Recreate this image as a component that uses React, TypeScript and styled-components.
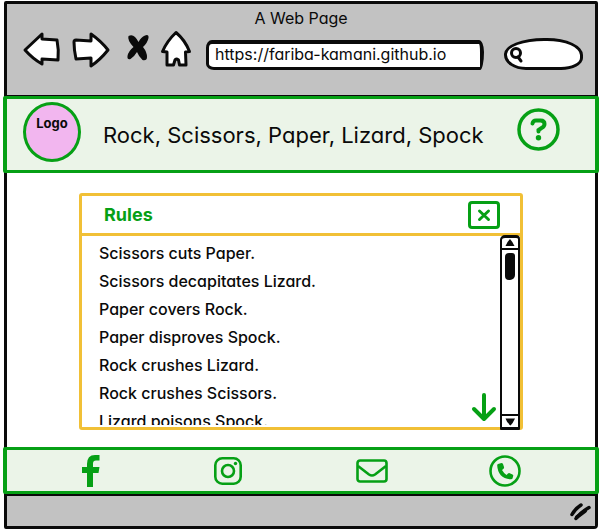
import React, { useRef } from "react";
import styled, { createGlobalStyle } from "styled-components";

const green = "#06a015";
const mint = "#ebf4e8";
const amber = "#f1c036";
const ink = "#0a0a0a";
const chrome = "#c2c2c2";

const GlobalStyle = createGlobalStyle`
  *, *::before, *::after { box-sizing: border-box; }
  body {
    margin: 0;
    background: #fff;
    color: ${ink};
    font-family: Inter, "Noto Sans", sans-serif;
    font-feature-settings: "cv11";
  }
  button, input { font: inherit; font-feature-settings: inherit; color: inherit; }
  svg { display: block; overflow: visible; }
`;

const BrowserWindow = styled.div`
  min-height: 526px;
  margin: 1px 2px 3px 4px;
  border: 3px solid ${ink};
  border-radius: 2px 2px 4px 2px;
  display: flex;
  flex-direction: column;
`;

const Chrome = styled.header`
  background: ${chrome};
  height: 92px;
  border-bottom: 1px solid ${ink};
`;

const WindowTitle = styled.div`
  padding-top: 4px;
  text-align: center;
  font-size: 16px;
  line-height: 20px;
`;

const Toolbar = styled.nav`
  display: flex;
  align-items: center;
  padding: 0 12px 0 16px;
  height: 42px;
`;

const IconButton = styled.button<{ $gap?: number }>`
  flex: none;
  padding: 0;
  border: 0;
  background: none;
  color: inherit;
  cursor: pointer;
  margin-right: ${(p) => p.$gap ?? 0}px;
`;

const Address = styled.input`
  flex: 1;
  min-width: 0;
  height: 30px;
  margin: 11px 20px 0 -1px;
  padding: 0 6px 3px;
  border: 3px solid ${ink};
  border-width: 4px 4px 3px 3px;
  border-radius: 6px 5px 4px 8px / 8px 12px 18px 6px;
  background: #fff;
  font-size: 16px;
  line-height: 22px;
  outline: none;
`;

const SearchBox = styled.label`
  flex: none;
  display: flex;
  align-items: center;
  width: 79px;
  height: 32px;
  margin-top: 10px;
  padding-left: 3px;
  border: 3px solid ${ink};
  border-radius: 40px 36px 22px 22px / 16px 17px 12px 15px;
  background: #fff;
`;

const SearchInput = styled.input`
  width: 100%;
  min-width: 0;
  padding: 0 4px;
  border: 0;
  background: none;
  font-size: 14px;
  outline: none;
`;

const Band = styled.div`
  margin: 0 -4px;
  border: 3px solid ${green};
  border-width: 3px 4px;
  border-radius: 2px;
  background: ${mint};
`;

const SiteHeader = styled(Band)`
  display: flex;
  align-items: center;
  height: 77px;
  padding: 0 35px 0 16px;
`;

const Logo = styled.a`
  flex: none;
  width: 58px;
  height: 60px;
  margin-top: -5px;
  padding-top: 10px;
  border: 3px solid ${green};
  border-radius: 50%;
  background: #f2b6ef;
  color: ${ink};
  font-size: 13px;
  font-weight: 700;
  line-height: 16px;
  text-align: center;
  text-decoration: none;
`;

const SiteTitle = styled.h1`
  flex: 1;
  margin: 0;
  padding-left: 22px;
  font-size: 22px;
  font-weight: 400;
  line-height: 28px;
  white-space: nowrap;
`;

const HelpButton = styled(IconButton)`
  margin-top: -10px;
`;

const Main = styled.main`
  flex: 1;
  padding: 20px 72px 17px;
  background: #fff;
`;

const Dialog = styled.section`
  height: 237px;
  border: 3px solid ${amber};
  border-radius: 3px;
  display: flex;
  flex-direction: column;
`;

const DialogHeader = styled.div`
  display: flex;
  align-items: center;
  justify-content: space-between;
  height: 40px;
  padding: 0 20px 0 22px;
  border-bottom: 3px solid ${amber};
`;

const DialogTitle = styled.h2`
  margin: 0;
  color: ${green};
  font-size: 18px;
  font-weight: 700;
  line-height: 24px;
`;

const DialogBody = styled.div`
  flex: 1;
  min-height: 0;
  display: flex;
`;

const RuleList = styled.ul`
  flex: 1;
  height: 189px;
  margin: 0;
  padding: 3px 0 0 17px;
  overflow: hidden;
  list-style: none;
  font-size: 16px;
  font-weight: 500;
  line-height: 28px;
`;

const MoreButton = styled(IconButton)`
  align-self: flex-end;
  margin: 0 4px 6px 0;
`;

const ScrollRail = styled.div`
  flex: none;
  display: flex;
  flex-direction: column;
  width: 20px;
  margin: -1px 0 -3px;
  border: 2px solid ${ink};
  border-width: 3px 2px;
  border-radius: 5px 4px 1px 1px;
  background: #fff;
`;

const ScrollTrack = styled.div`
  flex: 1;
  padding: 3px;
  border: solid ${ink};
  border-width: 2px 0;
`;

const ScrollThumb = styled.div`
  width: 10px;
  height: 27px;
  border-radius: 4px 3px 5px 4px;
  background: ${ink};
`;

const SocialBar = styled(Band)`
  display: grid;
  grid-template-columns: 138fr 136fr 152fr 114fr;
  align-items: center;
  justify-items: center;
  height: 47px;
  padding: 0 33px 0 15px;
`;

const SocialLink = styled.a`
  color: ${green};
`;

const StatusBar = styled.footer`
  display: flex;
  align-items: center;
  justify-content: flex-end;
  height: 32px;
  padding-right: 4px;
  border-top: 2px solid ${ink};
  background: ${chrome};
`;

const BackIcon = () => (
  <svg width="37" height="34" viewBox="0 0 37 34" fill="#fff" stroke={ink} strokeWidth="3" strokeLinejoin="round">
    <path d="M2 18 19 2V7L34 8Q36 18 35 28L19 27V32Q10 27 2 18Z" />
  </svg>
);

const ForwardIcon = () => (
  <svg width="38" height="35" viewBox="0 0 38 35" fill="#fff" stroke={ink} strokeWidth="3" strokeLinejoin="round">
    <path d="M2 10Q2 8 4 8L19 9V2Q29 9 36 18Q28 28 19 34V26L4 27Q2 18 2 10Z" />
  </svg>
);

const StopIcon = () => (
  <svg width="22" height="30" viewBox="0 0 22 30" fill={ink}>
    <path d="M1.500 2Q5 0 8 3Q10 5 11.500 8Q14 3 18 1.500Q22 0 21.500 4Q20.500 9 16 13Q20 18 20 23Q20 27 15.500 26Q11.500 22 10 18Q7 23 3.500 25Q0 26 0.500 22Q1.500 17 6.500 13Q0 6 1.500 2Z" />
  </svg>
);

const HomeIcon = () => (
  <svg width="30" height="36" viewBox="0 0 30 36" fill="#fff" stroke={ink} strokeWidth="3" strokeLinejoin="round">
    <path d="M15 1.500Q24 9 28.500 20.500L24.500 21L25 34H18.500L17.500 29Q15 27 14 29L12.500 34H6V21L1.500 20.500Q6 10 15 1.500Z" />
  </svg>
);

const SearchIcon = () => (
  <svg width="13" height="15" viewBox="0 0 13 15" fill="none" stroke={ink} strokeWidth="3" strokeLinecap="round">
    <circle cx="6" cy="6" r="4.5" />
    <path d="m8 10 3 4" />
  </svg>
);

const HelpIcon = () => (
  <svg width="43" height="43" viewBox="0 0 43 43" fill="none" stroke={green} strokeWidth="3.5" strokeLinecap="round">
    <circle cx="21.5" cy="21.5" r="19.5" />
    <path d="M15.5 15.5Q16 12.5 19 12.5H23.5Q27.5 12.5 27.5 16Q27.5 18.5 24.5 20L21.5 22V23.5" strokeWidth="4" />
    <circle cx="21.5" cy="29.8" r="2.7" fill={green} stroke="none" />
  </svg>
);

const CloseIcon = () => (
  <svg width="32" height="28" viewBox="0 0 32 28" fill="none" stroke={green} strokeWidth="3" strokeLinecap="round">
    <rect x="1.5" y="1.5" width="29" height="25" rx="2.5" />
    <path d="m11.5 10 9 8.500m0-8.500-9 8.500" />
  </svg>
);

const DownIcon = () => (
  <svg width="24" height="28" viewBox="0 0 24 28" fill="none" stroke={green} strokeWidth="4" strokeLinecap="round" strokeLinejoin="round">
    <path d="M12 2V25M2 16l10 10 10-10" />
  </svg>
);

const UpTriangle = () => (
  <svg width="16" height="10" viewBox="0 0 16 10" fill={ink}>
    <path d="M8 1Q10 3 12.500 8H3.500Q5 4 8 1Z" />
  </svg>
);

const DownTriangle = () => (
  <svg width="16" height="11" viewBox="0 0 16 11" fill={ink}>
    <path d="M3.500 2.500H13Q11 7 8.500 9.500Q5 7 3.500 2.500Z" />
  </svg>
);

const FacebookIcon = () => (
  <svg width="18" height="32" viewBox="0 0 18 32" fill={green}>
    <path d="M5 32V18H0V12H5V9Q5 0 13 0H17.500V5.500H14Q11 5.500 11 8.500V12H17.500L16.500 18H11V32Z" />
  </svg>
);

const InstagramIcon = () => (
  <svg width="28" height="28" viewBox="0 0 28 28" fill="none" stroke={green} strokeWidth="2.600">
    <rect x="1.300" y="1.300" width="25.400" height="25.400" rx="7" />
    <circle cx="14" cy="14" r="6" />
    <circle cx="21.500" cy="6.500" r="1.700" fill={green} stroke="none" />
  </svg>
);

const MailIcon = () => (
  <svg width="32" height="24" viewBox="0 0 32 24" fill="none" stroke={green} strokeWidth="2.600" strokeLinejoin="round">
    <rect x="1.500" y="1.500" width="29" height="21" rx="2.500" />
    <path d="m2 7 11 8.500q3 2 6 0L30 7" />
  </svg>
);

const PhoneIcon = () => (
  <svg width="32" height="32" viewBox="0 0 32 32" fill="none" stroke={green} strokeWidth="2.600">
    <circle cx="16" cy="16" r="14.500" />
    <path
      d="M9 9 12.500 8Q13.500 8 14 9L15 12Q15.300 13 14.500 13.700L13 15Q15 18.500 17.500 20L19 18.500Q19.800 17.800 20.700 18.200L23.500 19.500Q24.500 20 24.200 21L23.500 23.500Q23.200 24.300 22 24.300Q9 23.500 8.200 10.500Q8.200 9.300 9 9Z"
      fill={green}
      stroke="none"
    />
  </svg>
);

const ResizeGrip = () => (
  <svg width="21" height="17" viewBox="0 0 21 17" fill="none" stroke={ink} strokeWidth="3.500" strokeLinecap="round">
    <path d="M2 11.500Q5 6 11 2M6 15.500Q11 9 19 4.500" />
    <path d="M7 14 15 8" strokeWidth="4" />
  </svg>
);

const rules = [
  "Scissors cuts Paper.",
  "Scissors decapitates Lizard.",
  "Paper covers Rock.",
  "Paper disproves Spock.",
  "Rock crushes Lizard.",
  "Rock crushes Scissors.",
  "Lizard poisons Spock.",
];

const socials = [
  { label: "Facebook", Icon: FacebookIcon },
  { label: "Instagram", Icon: InstagramIcon },
  { label: "Email", Icon: MailIcon },
  { label: "Phone", Icon: PhoneIcon },
];

export default function App() {
  const list = useRef<HTMLUListElement>(null);
  const scroll = (amount: number) => list.current?.scrollBy({ top: amount });

  return (
    <>
      <GlobalStyle />
      <BrowserWindow>
        <Chrome>
          <WindowTitle>A Web Page</WindowTitle>
          <Toolbar>
            <IconButton aria-label="Back" $gap={12}><BackIcon /></IconButton>
            <IconButton aria-label="Forward" $gap={17}><ForwardIcon /></IconButton>
            <IconButton aria-label="Stop" $gap={12}><StopIcon /></IconButton>
            <IconButton aria-label="Home" $gap={16}><HomeIcon /></IconButton>
            <Address aria-label="Address" defaultValue="https://fariba-kamani.github.io" />
            <SearchBox>
              <SearchIcon />
              <SearchInput type="text" aria-label="Search" />
            </SearchBox>
          </Toolbar>
        </Chrome>
        <SiteHeader>
          <Logo href="#">Logo</Logo>
          <SiteTitle>Rock, Scissors, Paper, Lizard, Spock</SiteTitle>
          <HelpButton aria-label="Help"><HelpIcon /></HelpButton>
        </SiteHeader>
        <Main>
          <Dialog aria-labelledby="rules-title">
            <DialogHeader>
              <DialogTitle id="rules-title">Rules</DialogTitle>
              <IconButton aria-label="Close"><CloseIcon /></IconButton>
            </DialogHeader>
            <DialogBody>
              <RuleList ref={list}>
                {rules.map((rule) => <li key={rule}>{rule}</li>)}
              </RuleList>
              <MoreButton aria-label="Next rules" onClick={() => scroll(84)}><DownIcon /></MoreButton>
              <ScrollRail>
                <IconButton aria-label="Scroll up" onClick={() => scroll(-28)}><UpTriangle /></IconButton>
                <ScrollTrack><ScrollThumb /></ScrollTrack>
                <IconButton aria-label="Scroll down" onClick={() => scroll(28)}><DownTriangle /></IconButton>
              </ScrollRail>
            </DialogBody>
          </Dialog>
        </Main>
        <SocialBar>
          {socials.map(({ label, Icon }) => (
            <SocialLink key={label} href="#" aria-label={label}><Icon /></SocialLink>
          ))}
        </SocialBar>
        <StatusBar><ResizeGrip /></StatusBar>
      </BrowserWindow>
    </>
  );
}
